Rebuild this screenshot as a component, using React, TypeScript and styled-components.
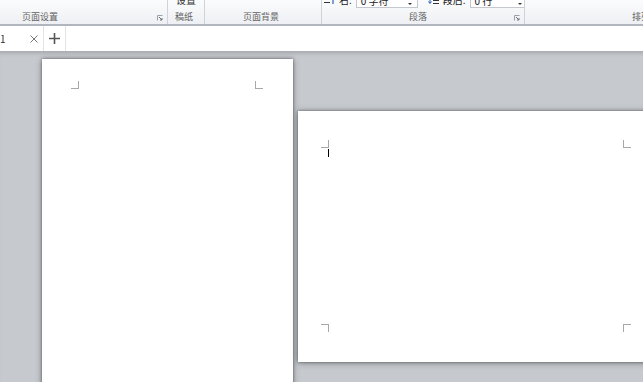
import React from "react";
import styled, { createGlobalStyle } from "styled-components";

const Global = createGlobalStyle`
  html, body { margin: 0; padding: 0; width: 643px; height: 382px; overflow: hidden; background: #c6c9ce; }
  body { font-family: "Noto Sans CJK SC", "Noto Sans", sans-serif; }
  #root { width: 643px; height: 382px; }
`;

const Shell = styled.div`
  display: flex;
  flex-direction: column;
  width: 643px;
  height: 382px;
  overflow: hidden;
`;

const Ribbon = styled.div`
  display: flex;
  height: 24px;
  flex-shrink: 0;
  background: linear-gradient(#fbfcfd, #eef0f3);
  border-bottom: 2px solid #b1b6be;
`;

const Group = styled.div<{ $w: number; $last?: boolean }>`
  position: relative;
  width: ${(p) => p.$w}px;
  flex-shrink: 0;
  display: flex;
  flex-direction: column;
  justify-content: flex-end;
  overflow: hidden;
  border-right: ${(p) => (p.$last ? "none" : "1px solid #cfd3d9")};
`;

const Controls = styled.div<{ $pl?: number }>`
  display: flex;
  align-items: center;
  height: 18px;
  padding-left: ${(p) => p.$pl ?? 0}px;
  gap: 4px;
  flex-shrink: 0;
`;

const Field = styled.div<{ $ml?: number }>`
  display: flex;
  align-items: center;
  gap: 4px;
  margin-left: ${(p) => p.$ml ?? 0}px;
`;

const FieldLabel = styled.span`
  font-size: 10px;
  color: #222;
  white-space: nowrap;
  line-height: 1;
`;

const Combo = styled.div<{ $w: number }>`
  position: relative;
  width: ${(p) => p.$w}px;
  height: 16px;
  box-sizing: border-box;
  background: #fff;
  border: 1px solid #c4c8ce;
  display: flex;
  align-items: center;
  padding-left: 4px;
  font-size: 10px;
  color: #222;
  white-space: nowrap;
`;

const ComboArrow = styled.span`
  position: absolute;
  right: 5px;
  bottom: 2px;
  width: 0;
  height: 0;
  border-left: 2px solid transparent;
  border-right: 2px solid transparent;
  border-top: 2px solid #333;
`;

const TopText = styled.div`
  font-size: 10px;
  color: #333;
  line-height: 1;
  text-align: center;
  width: 100%;
  white-space: nowrap;
`;

const LabelRow = styled.div<{ $pl?: number; $center?: boolean }>`
  display: flex;
  align-items: center;
  height: 15px;
  flex-shrink: 0;
  padding-left: ${(p) => p.$pl ?? 0}px;
  padding-right: 4px;
  justify-content: ${(p) => (p.$center ? "center" : "flex-start")};
`;

const GroupLabel = styled.span<{ $grow?: boolean }>`
  font-size: 9px;
  line-height: 1;
  color: #636363;
  white-space: nowrap;
  flex: ${(p) => (p.$grow ? 1 : "none")};
  text-align: center;
`;

const Launcher = styled.svg`
  flex-shrink: 0;
  margin-left: auto;
  margin-top: 2px;
`;

const TabBar = styled.div`
  display: flex;
  height: 25px;
  flex-shrink: 0;
  background: #fff;
`;

const Tab = styled.div`
  display: flex;
  align-items: center;
  width: 43px;
  border-right: 1px solid #e2e3e5;
  overflow: hidden;
`;

const TabTitle = styled.span`
  margin-left: -20px;
  font-size: 10px;
  color: #333;
  white-space: nowrap;
`;

const TabClose = styled.svg`
  margin-left: auto;
  margin-right: 5px;
`;

const AddTab = styled.div`
  width: 21px;
  display: flex;
  align-items: center;
  justify-content: center;
  border-right: 1px solid #e2e3e5;
`;

const DocArea = styled.div`
  flex: 1;
  display: flex;
  align-items: flex-start;
  gap: 5px;
  padding-left: 42px;
  background: #c6c9ce;
  box-shadow: inset 0 5px 4px -3px rgba(0, 0, 0, 0.18);
  overflow: hidden;
`;

const Page = styled.div<{ $w: number; $h: number; $top: number; $pt: number; $pl: number }>`
  width: ${(p) => p.$w}px;
  height: ${(p) => p.$h}px;
  margin-top: ${(p) => p.$top}px;
  flex-shrink: 0;
  box-sizing: border-box;
  background: #fff;
  padding-top: ${(p) => p.$pt}px;
  padding-left: ${(p) => p.$pl}px;
  box-shadow: 0 0 3px rgba(0, 0, 0, 0.45), 0 1px 7px rgba(0, 0, 0, 0.3);
`;

const TextArea = styled.div<{ $w: number; $h: number }>`
  position: relative;
  width: ${(p) => p.$w}px;
  height: ${(p) => p.$h}px;
`;

type Pos = "tl" | "tr" | "bl" | "br";

const Mark = styled.div<{ $pos: Pos }>`
  position: absolute;
  width: 7px;
  height: 7px;
  border: 0 solid #a9a9a9;
  ${(p) => (p.$pos[0] === "t" ? "top: -8px;" : "bottom: -8px;")}
  ${(p) => (p.$pos[1] === "l" ? "left: -8px;" : "left: 100%;")}
  ${(p) => (p.$pos[0] === "t" ? "border-bottom-width: 1px;" : "border-top-width: 1px;")}
  ${(p) => (p.$pos[1] === "l" ? "border-right-width: 1px;" : "border-left-width: 1px;")}
`;

const Caret = styled.div`
  position: absolute;
  left: -1px;
  top: 1px;
  width: 1px;
  height: 8px;
  background: #000;
`;

const LauncherIcon = () => (
  <Launcher width="6" height="6" viewBox="0 0 6 6">
    <path d="M0.5 5.5V0.5H5.5" fill="none" stroke="#9aa0a8" strokeWidth="1" />
    <path d="M2 2L5 5M5 3V5H3" fill="none" stroke="#6c7480" strokeWidth="1" />
  </Launcher>
);

const Corners = () => (
  <>
    <Mark $pos="tl" />
    <Mark $pos="tr" />
    <Mark $pos="bl" />
    <Mark $pos="br" />
  </>
);

export default function App() {
  return (
    <Shell>
      <Global />
      <Ribbon>
        <Group $w={167}>
          <Controls />
          <LabelRow $pl={22}>
            <GroupLabel>页面设置</GroupLabel>
            <LauncherIcon />
          </LabelRow>
        </Group>
        <Group $w={36}>
          <Controls>
            <TopText>设置</TopText>
          </Controls>
          <LabelRow $center>
            <GroupLabel>稿纸</GroupLabel>
          </LabelRow>
        </Group>
        <Group $w={116}>
          <Controls />
          <LabelRow $center>
            <GroupLabel>页面背景</GroupLabel>
          </LabelRow>
        </Group>
        <Group $w={202}>
          <Controls $pl={2}>
            <Field>
              <svg width="11" height="10" viewBox="0 0 11 10">
                <path d="M0 1.5H6M0 4.5H6M0 7.5H6" stroke="#333" strokeWidth="1.2" />
                <path d="M9 1V9" stroke="#2a62b8" strokeWidth="1.2" />
              </svg>
              <FieldLabel>右:</FieldLabel>
              <Combo $w={62}>
                0 字符
                <ComboArrow />
              </Combo>
            </Field>
            <Field $ml={6}>
              <svg width="11" height="10" viewBox="0 0 11 10">
                <path d="M2 3V8M0.5 6.5L2 8.5L3.5 6.5" fill="none" stroke="#2a62b8" strokeWidth="1" />
                <path d="M5 2.5H11M5 5.5H11M5 8.5H11" stroke="#333" strokeWidth="1.2" />
              </svg>
              <FieldLabel>段后:</FieldLabel>
              <Combo $w={58}>
                0 行
                <ComboArrow />
              </Combo>
            </Field>
          </Controls>
          <LabelRow>
            <GroupLabel $grow>段落</GroupLabel>
            <LauncherIcon />
          </LabelRow>
        </Group>
        <Group $w={130} $last>
          <Controls />
          <LabelRow $pl={107}>
            <GroupLabel>排列</GroupLabel>
          </LabelRow>
        </Group>
      </Ribbon>
      <TabBar>
        <Tab>
          <TabTitle>文档1</TabTitle>
          <TabClose width="8" height="8" viewBox="0 0 8 8">
            <path d="M0.5 0.5L7.5 7.5M7.5 0.5L0.5 7.5" stroke="#777" strokeWidth="1" />
          </TabClose>
        </Tab>
        <AddTab>
          <svg width="11" height="11" viewBox="0 0 11 11">
            <path d="M5.5 0V11M0 5.5H11" stroke="#555" strokeWidth="1.6" />
          </svg>
        </AddTab>
      </TabBar>
      <DocArea>
        <Page $w={251} $h={360} $top={8} $pt={30} $pl={37}>
          <TextArea $w={176} $h={360}>
            <Corners />
          </TextArea>
        </Page>
        <Page $w={355} $h={251} $top={60} $pt={37} $pl={31}>
          <TextArea $w={294} $h={176}>
            <Corners />
            <Caret />
          </TextArea>
        </Page>
      </DocArea>
    </Shell>
  );
}
